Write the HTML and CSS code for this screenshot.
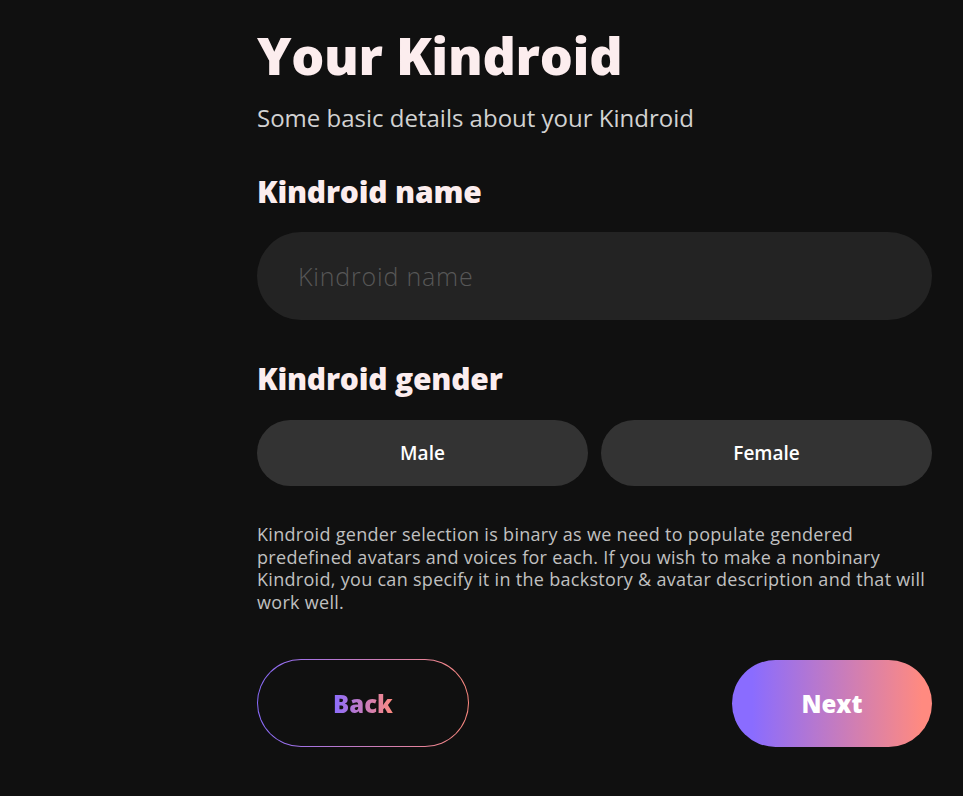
FILE: index.html
```html
<!DOCTYPE html>
<html lang="en">
<head>
    <meta charset="UTF-8">
    <meta name="viewport" content="width=device-width, initial-scale=1.0">
    <title>Your Kindroid</title>
    <link rel="stylesheet" href="styles.css">
</head>
<body>
    <div class="container">
        <h1>Your Kindroid</h1>
        <p class="subtitle">Some basic details about your Kindroid</p>

        <h2 class="label">Kindroid name</h2>
        <input class="name-input" type="text" placeholder="Kindroid name">

        <h2 class="label gender-label">Kindroid gender</h2>
        <div class="gender-row">
            <button class="gender-btn">Male</button>
            <button class="gender-btn">Female</button>
        </div>

        <p class="note">Kindroid gender selection is binary as we need to populate gendered predefined avatars and voices for each. If you wish to make a nonbinary Kindroid, you can specify it in the backstory &amp; avatar description and that will work well.</p>

        <div class="actions">
            <button class="btn-back"><span>Back</span></button>
            <button class="btn-next">Next</button>
        </div>
    </div>
</body>
</html>
```

FILE: styles.css
```css
:root {
    --background: #101010;
    --input: #232323;
    --chip: #333333;
    --heading: #fcedee;
    --text-secondary: #d2d2d2;
    --note: #c0c0c0;
    --placeholder: #575757;
    --grad-start: #8a6cff;
    --grad-end: #ff8a80;
}

* {
    margin: 0;
    padding: 0;
    box-sizing: border-box;
}

body {
    background: var(--background);
    font-family: "Open Sans", sans-serif;
    -webkit-font-smoothing: antialiased;
}

.container {
    width: 675px;
    margin-left: 257px;
    padding-top: 23px;
}

h1 {
    font-size: 52px;
    font-weight: 800;
    line-height: 64px;
    color: var(--heading);
    letter-spacing: -0.3px;
}

.subtitle {
    font-size: 24px;
    line-height: 32px;
    color: var(--text-secondary);
    margin-top: 15px;
}

.label {
    font-size: 30px;
    font-weight: 800;
    line-height: 38px;
    color: var(--heading);
    letter-spacing: -0.2px;
    margin-top: 39px;
}

.gender-label {
    margin-top: 40px;
}

.name-input {
    display: block;
    width: 100%;
    height: 88px;
    margin-top: 21px;
    padding: 0 41px;
    border: none;
    border-radius: 44px;
    background: var(--input);
    font-family: "Open Sans", sans-serif;
    font-size: 25px;
    font-weight: 300;
    letter-spacing: 0.8px;
    color: var(--heading);
    outline: none;
}

.name-input::placeholder {
    color: var(--placeholder);
}

.gender-row {
    display: grid;
    grid-template-columns: 1fr 1fr;
    gap: 13px;
    margin-top: 22px;
}

.gender-btn {
    height: 66px;
    border: none;
    border-radius: 33px;
    background: var(--chip);
    color: #ffffff;
    font-family: "Open Sans", sans-serif;
    font-size: 19px;
    font-weight: 600;
    cursor: pointer;
}

.note {
    margin-top: 37px;
    font-size: 18px;
    line-height: 22.5px;
    color: var(--note);
    letter-spacing: 0.3px;
}

.actions {
    display: flex;
    justify-content: space-between;
    align-items: center;
    margin-top: 46px;
}

.btn-back {
    width: 212px;
    height: 88px;
    border-radius: 44px;
    border: 1.5px solid transparent;
    background:
        linear-gradient(var(--background), var(--background)) padding-box,
        linear-gradient(90deg, var(--grad-start), var(--grad-end)) border-box;
    font-family: "Open Sans", sans-serif;
    font-size: 24px;
    font-weight: 800;
    cursor: pointer;
}

.btn-back span {
    background: linear-gradient(90deg, var(--grad-start), var(--grad-end));
    -webkit-background-clip: text;
    background-clip: text;
    color: transparent;
}

.btn-next {
    width: 200px;
    height: 87px;
    border: none;
    border-radius: 44px;
    background: linear-gradient(90deg, var(--grad-start) 10%, var(--grad-end) 95%);
    color: #ffffff;
    font-family: "Open Sans", sans-serif;
    font-size: 24px;
    font-weight: 800;
    cursor: pointer;
}
```
